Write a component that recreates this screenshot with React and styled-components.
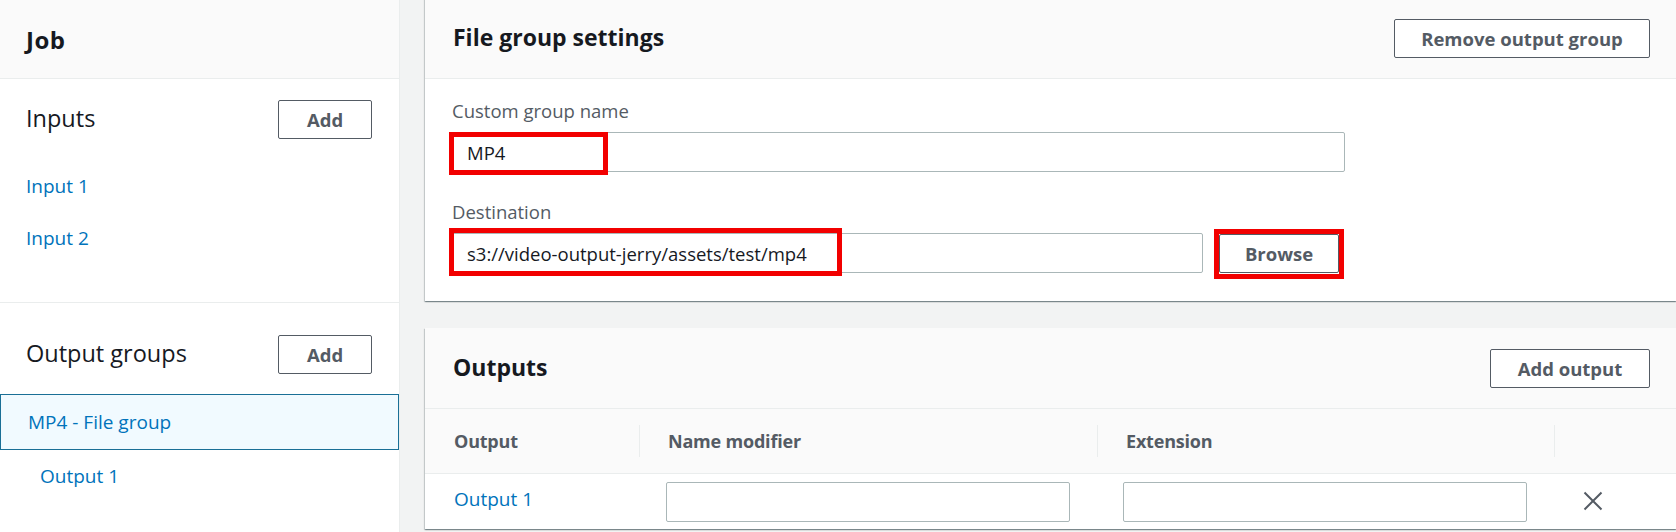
import React from "react";
import styled, { createGlobalStyle } from "styled-components";

const GlobalStyle = createGlobalStyle`
  html, body {
    margin: 0;
    padding: 0;
    background: #f2f3f3;
    font-family: "Open Sans", "Noto Sans", "Liberation Sans", sans-serif;
    color: #16191f;
    overflow: hidden;
  }
  * { box-sizing: border-box; }
`;

const Layout = styled.div`
  display: flex;
  height: 100vh;
  overflow: hidden;
  background: #f2f3f3;
`;

const Sidebar = styled.aside`
  width: 400px;
  flex: none;
  background: #ffffff;
  border-right: 1px solid #eaeded;
`;

const SideHeader = styled.div`
  height: 79px;
  display: flex;
  align-items: center;
  padding-left: 26px;
  background: #fafafa;
  border-bottom: 1px solid #eaeded;
  font-size: 24px;
  font-weight: 700;
  letter-spacing: 0.5px;
`;

const InputsSection = styled.section`
  height: 224px;
  padding-top: 21px;
  border-bottom: 1px solid #eaeded;
`;

const OutputsSection = styled.section`
  padding-top: 32px;
`;

const SectionHead = styled.div`
  display: flex;
  align-items: center;
  justify-content: space-between;
  height: 39px;
  padding: 0 27px 0 26px;
`;

const SectionTitle = styled.h2`
  margin: 0;
  padding-bottom: 4px;
  font-size: 23.5px;
  font-weight: 400;
  line-height: 32px;
  color: #16191f;
`;

const Button = styled.button`
  height: 39px;
  width: ${(p) => p.$w}px;
  padding: 0;
  border: 1px solid #545b64;
  border-radius: 2px;
  background: #ffffff;
  color: #545b64;
  font-family: inherit;
  font-size: 18.5px;
  font-weight: 700;
  cursor: pointer;
`;

const LinkList = styled.nav`
  display: flex;
  flex-direction: column;
  gap: 28px;
  margin-top: 35px;
  padding-left: 26px;
`;

const NavLink = styled.a`
  display: block;
  font-size: 19px;
  line-height: 24px;
  color: #0073bb;
  text-decoration: none;
`;

const SelectedItem = styled.div`
  margin-top: 20px;
  height: 56px;
  display: flex;
  align-items: center;
  padding-left: 27px;
  background: #f1faff;
  border: 1px solid #1a6f96;
`;

const SubItem = styled.div`
  height: 52px;
  display: flex;
  align-items: center;
  padding-left: 40px;
`;

const Main = styled.main`
  flex: 1;
  min-width: 0;
  margin-top: -2px;
  padding-left: 25px;
  display: flex;
  flex-direction: column;
  gap: 27px;
`;

const Card = styled.section`
  background: #ffffff;
  box-shadow: 0 1px 1px 0 rgba(0, 28, 36, 0.3),
    1px 1px 1px 0 rgba(0, 28, 36, 0.15),
    -1px 1px 1px 0 rgba(0, 28, 36, 0.15);
`;

const CardHeader = styled.header`
  height: 81px;
  display: flex;
  align-items: center;
  justify-content: space-between;
  padding: 0 26px 0 28px;
  background: #fafafa;
  border-bottom: 1px solid #eaeded;
`;

const CardTitle = styled.h2`
  margin: 0;
  padding-bottom: 3px;
  font-size: 23px;
  font-weight: 700;
  color: #16191f;
`;

const CardBody = styled.div`
  padding: 20px 25px 28px 24px;
  display: flex;
  flex-direction: column;
  gap: 28px;
`;

const Field = styled.div`
  display: flex;
  flex-direction: column;
  gap: 9px;
`;

const Label = styled.label`
  display: block;
  padding-left: 3px;
  font-size: 18.5px;
  line-height: 24px;
  color: #545b64;
`;

const Control = styled.div`
  display: flex;
  align-items: center;
  gap: 16px;
`;

const Marked = styled.div`
  position: relative;
  flex: none;
  width: ${(p) => p.$w}px;
`;

const RedMark = styled.span`
  position: absolute;
  left: ${(p) => p.$l}px;
  top: ${(p) => p.$t}px;
  width: ${(p) => p.$w}px;
  height: ${(p) => p.$h}px;
  border: 5px solid #f20000;
  pointer-events: none;
`;

const TextInput = styled.input`
  display: block;
  width: ${(p) => (p.$w ? `${p.$w}px` : "100%")};
  height: 40px;
  padding: 0 12px 0 17px;
  border: 1px solid #aab7b8;
  border-radius: 2px;
  background: #ffffff;
  font-family: inherit;
  font-size: 18.5px;
  color: #16191f;
  outline: none;
`;

const Grid = styled.div`
  display: grid;
  grid-template-columns: 214px 458px 457px 1fr;
`;

const HeadCell = styled.div`
  height: 65px;
  display: flex;
  align-items: center;
  background: #fafafa;
  border-bottom: 1px solid #eaeded;
`;

const HeadLabel = styled.span`
  height: 32px;
  line-height: 32px;
  padding-left: 28px;
  border-left: 1px solid ${(p) => (p.$divider ? "#eaeded" : "transparent")};
  font-size: 18px;
  font-weight: 700;
  color: #545b64;
  letter-spacing: -0.2px;
`;

const Cell = styled.div`
  height: 55px;
  display: flex;
  align-items: center;
  padding-left: ${(p) => p.$pad}px;
  padding-bottom: ${(p) => p.$lift || 0}px;
`;

const IconButton = styled.button`
  display: flex;
  padding: 0;
  border: none;
  background: transparent;
  cursor: pointer;
`;

const CloseIcon = () => (
  <svg width="20" height="20" viewBox="0 0 20 20" aria-hidden="true">
    <path d="M1.5 1.5 L18.5 18.5 M18.5 1.5 L1.5 18.5" stroke="#545b64" strokeWidth="2" fill="none" />
  </svg>
);

export default function App() {
  return (
    <>
      <GlobalStyle />
      <Layout>
        <Sidebar>
          <SideHeader>Job</SideHeader>
          <InputsSection>
            <SectionHead>
              <SectionTitle>Inputs</SectionTitle>
              <Button $w={94}>Add</Button>
            </SectionHead>
            <LinkList>
              <NavLink href="#">Input 1</NavLink>
              <NavLink href="#">Input 2</NavLink>
            </LinkList>
          </InputsSection>
          <OutputsSection>
            <SectionHead>
              <SectionTitle>Output groups</SectionTitle>
              <Button $w={94}>Add</Button>
            </SectionHead>
            <SelectedItem>
              <NavLink href="#">MP4 - File group</NavLink>
            </SelectedItem>
            <SubItem>
              <NavLink href="#">Output 1</NavLink>
            </SubItem>
          </OutputsSection>
        </Sidebar>

        <Main>
          <Card>
            <CardHeader>
              <CardTitle>File group settings</CardTitle>
              <Button $w={256}>Remove output group</Button>
            </CardHeader>
            <CardBody>
              <Field>
                <Label>Custom group name</Label>
                <Control>
                  <Marked $w={896}>
                    <TextInput defaultValue="MP4" />
                    <RedMark $l={0} $t={0} $w={159} $h={43} />
                  </Marked>
                </Control>
              </Field>
              <Field>
                <Label>Destination</Label>
                <Control>
                  <Marked $w={754}>
                    <TextInput defaultValue="s3://video-output-jerry/assets/test/mp4" />
                    <RedMark $l={0} $t={-5} $w={393} $h={48} />
                  </Marked>
                  <Marked $w={120}>
                    <Button $w={120}>Browse</Button>
                    <RedMark $l={-5} $t={-5} $w={130} $h={50} />
                  </Marked>
                </Control>
              </Field>
            </CardBody>
          </Card>

          <Card>
            <CardHeader>
              <CardTitle>Outputs</CardTitle>
              <Button $w={160}>Add output</Button>
            </CardHeader>
            <Grid>
              <HeadCell>
                <HeadLabel>Output</HeadLabel>
              </HeadCell>
              <HeadCell>
                <HeadLabel $divider>Name modifier</HeadLabel>
              </HeadCell>
              <HeadCell>
                <HeadLabel $divider>Extension</HeadLabel>
              </HeadCell>
              <HeadCell>
                <HeadLabel $divider />
              </HeadCell>

              <Cell $pad={29} $lift={5}>
                <NavLink href="#">Output 1</NavLink>
              </Cell>
              <Cell $pad={27}>
                <TextInput $w={404} />
              </Cell>
              <Cell $pad={26}>
                <TextInput $w={404} />
              </Cell>
              <Cell $pad={29} $lift={2}>
                <IconButton aria-label="Remove output">
                  <CloseIcon />
                </IconButton>
              </Cell>
            </Grid>
          </Card>
        </Main>
      </Layout>
    </>
  );
}
